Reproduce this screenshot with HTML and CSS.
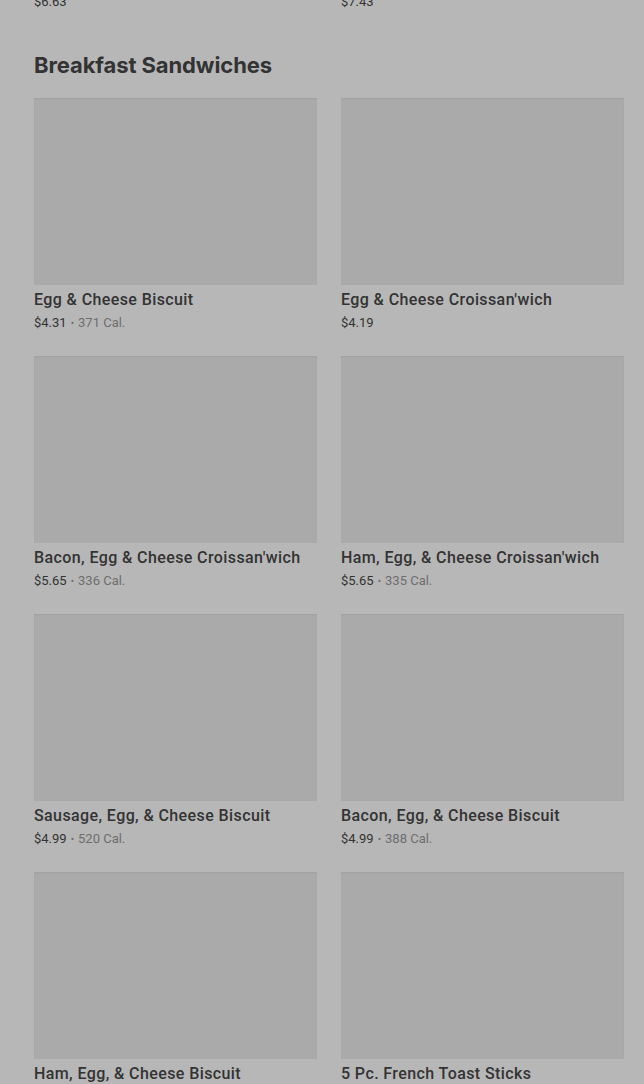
FILE: index.html
```html
<!DOCTYPE html>
<html lang="en">
<head>
    <meta charset="UTF-8">
    <meta name="viewport" content="width=device-width, initial-scale=1.0">
    <title>Menu | Breakfast Sandwiches</title>
    <link rel="stylesheet" href="styles.css">
</head>
<body>
    <div class="menu">
        <div class="item-grid prev-row">
            <div class="item-meta"><span class="price">$6.63</span></div>
            <div class="item-meta"><span class="price">$7.43</span></div>
        </div>

        <section class="category">
            <h2>Breakfast Sandwiches</h2>
            <div class="item-grid">
                <div class="item">
                    <div class="item-image"></div>
                    <div class="item-name">Egg &amp; Cheese Biscuit</div>
                    <div class="item-meta"><span class="price">$4.31</span><span class="dot">•</span><span class="cal">371 Cal.</span></div>
                </div>
                <div class="item">
                    <div class="item-image"></div>
                    <div class="item-name">Egg &amp; Cheese Croissan'wich</div>
                    <div class="item-meta"><span class="price">$4.19</span></div>
                </div>
                <div class="item">
                    <div class="item-image"></div>
                    <div class="item-name">Bacon, Egg &amp; Cheese Croissan'wich</div>
                    <div class="item-meta"><span class="price">$5.65</span><span class="dot">•</span><span class="cal">336 Cal.</span></div>
                </div>
                <div class="item">
                    <div class="item-image"></div>
                    <div class="item-name">Ham, Egg, &amp; Cheese Croissan'wich</div>
                    <div class="item-meta"><span class="price">$5.65</span><span class="dot">•</span><span class="cal">335 Cal.</span></div>
                </div>
                <div class="item">
                    <div class="item-image"></div>
                    <div class="item-name">Sausage, Egg, &amp; Cheese Biscuit</div>
                    <div class="item-meta"><span class="price">$4.99</span><span class="dot">•</span><span class="cal">520 Cal.</span></div>
                </div>
                <div class="item">
                    <div class="item-image"></div>
                    <div class="item-name">Bacon, Egg, &amp; Cheese Biscuit</div>
                    <div class="item-meta"><span class="price">$4.99</span><span class="dot">•</span><span class="cal">388 Cal.</span></div>
                </div>
                <div class="item">
                    <div class="item-image"></div>
                    <div class="item-name">Ham, Egg, &amp; Cheese Biscuit</div>
                    <div class="item-meta"><span class="price">$4.99</span><span class="dot">•</span><span class="cal">410 Cal.</span></div>
                </div>
                <div class="item">
                    <div class="item-image"></div>
                    <div class="item-name">5 Pc. French Toast Sticks</div>
                    <div class="item-meta"><span class="price">$3.29</span><span class="dot">•</span><span class="cal">240 Cal.</span></div>
                </div>
            </div>
        </section>
    </div>
</body>
</html>
```

FILE: styles.css
```css
:root {
    --page: #b7b7b7;
    --image: #aaaaaa;
    --text: #333333;
    --muted: #6e6e6e;
}

* {
    margin: 0;
    padding: 0;
    box-sizing: border-box;
}

html, body {
    background-color: var(--page);
    overflow: hidden;
}

body {
    font-family: Roboto, 'Liberation Sans', sans-serif;
    color: var(--text);
}

.menu {
    padding: 0 20px 0 34px;
}

.item-grid {
    display: grid;
    grid-template-columns: 283px 283px;
    column-gap: 24px;
    row-gap: 22px;
}

.prev-row {
    margin-top: -10px;
}

.category {
    padding-top: 38px;
}

h2 {
    font-family: Inter, 'Liberation Sans', sans-serif;
    font-size: 22px;
    font-weight: 700;
    letter-spacing: -0.1px;
    line-height: 30px;
    margin-bottom: 18px;
}

.item {
    display: flex;
    flex-direction: column;
}

.item-image {
    height: 187px;
    background-color: var(--image);
    box-shadow: inset 0 1px 2px rgba(0, 0, 0, 0.06);
}

.item-name {
    font-size: 16px;
    font-weight: 500;
    letter-spacing: 0.4px;
    line-height: 22px;
    margin-top: 4px;
}

.item-meta {
    font-size: 13px;
    line-height: 20px;
    margin-top: 2px;
}

.price {
    color: var(--text);
}

.dot {
    color: var(--muted);
    margin: 0 4px;
    font-size: 10px;
}

.cal {
    color: var(--muted);
}
```
